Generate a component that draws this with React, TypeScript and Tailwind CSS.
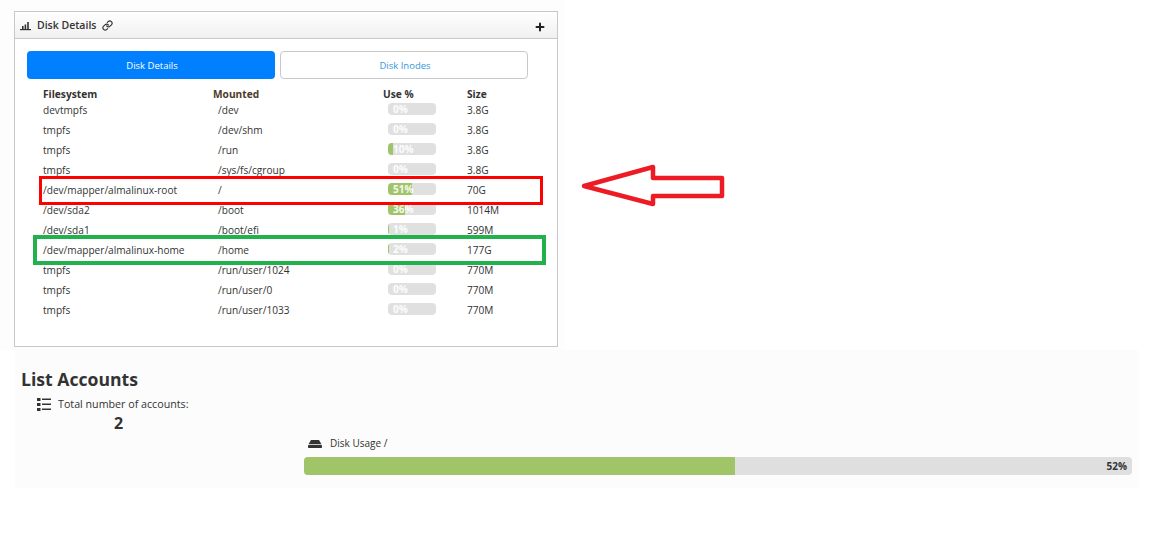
import { Link, Plus } from 'lucide-react'

interface DiskRow {
  fs: string
  mount: string
  use: number
  size: string
}

const ROWS: DiskRow[] = [
  { fs: 'devtmpfs', mount: '/dev', use: 0, size: '3.8G' },
  { fs: 'tmpfs', mount: '/dev/shm', use: 0, size: '3.8G' },
  { fs: 'tmpfs', mount: '/run', use: 10, size: '3.8G' },
  { fs: 'tmpfs', mount: '/sys/fs/cgroup', use: 0, size: '3.8G' },
  { fs: '/dev/mapper/almalinux-root', mount: '/', use: 51, size: '70G' },
  { fs: '/dev/sda2', mount: '/boot', use: 36, size: '1014M' },
  { fs: '/dev/sda1', mount: '/boot/efi', use: 1, size: '599M' },
  { fs: '/dev/mapper/almalinux-home', mount: '/home', use: 2, size: '177G' },
  { fs: 'tmpfs', mount: '/run/user/1024', use: 0, size: '770M' },
  { fs: 'tmpfs', mount: '/run/user/0', use: 0, size: '770M' },
  { fs: 'tmpfs', mount: '/run/user/1033', use: 0, size: '770M' },
]

function ChartIcon() {
  return (
    <svg width="11" height="10" viewBox="0 0 11 10" className="text-[#333]" fill="currentColor">
      <rect x="0" y="8" width="11" height="1.2" />
      <rect x="2" y="5" width="1.6" height="3" />
      <rect x="4.6" y="3.5" width="1.6" height="4.5" />
      <rect x="7.2" y="1" width="1.6" height="7" />
    </svg>
  )
}

function ListIcon() {
  return (
    <svg width="14" height="13" viewBox="0 0 14 13" className="text-[#333]" fill="currentColor">
      <rect x="0" y="0" width="3.5" height="3" />
      <rect x="5" y="0.5" width="9" height="1.5" />
      <rect x="0" y="5" width="3.5" height="3" />
      <rect x="5" y="5.5" width="9" height="1.5" />
      <rect x="0" y="10" width="3.5" height="3" />
      <rect x="5" y="10.5" width="9" height="1.5" />
    </svg>
  )
}

function DriveIcon() {
  return (
    <svg width="14" height="8" viewBox="0 0 14 8" className="text-[#333]" fill="currentColor">
      <path d="M3 0h8l2.5 4.2H.5z" />
      <rect x="0" y="5" width="14" height="3" rx="0.8" />
    </svg>
  )
}

function UseBar({ value }: { value: number }) {
  return (
    <div className="relative h-3 w-12 overflow-hidden rounded bg-[#e0e0e0]">
      <div className="h-full bg-[#a0c569]" style={{ width: `${value}%` }} />
      <span className="absolute inset-y-0 left-[5px] flex items-center pb-[1px] text-[10px] font-bold leading-none text-white/90">
        {value}%
      </span>
    </div>
  )
}

export default function App() {
  return (
    <div className="relative h-[534px] w-[1169px] overflow-hidden bg-white font-['Open_Sans',sans-serif] text-[#333]">
      <div className="h-[350px] w-[565px] bg-[#fdfdfd] pl-[14px] pt-[11px]">
        <div className="h-[336px] w-[544px] border border-[#c8c8c8] bg-white">
          {/* Panel header */}
          <div className="flex h-[27px] items-center justify-between border-b border-[#c8c8c8] bg-gradient-to-b from-white to-[#f0f0f0] pl-[5px] pr-[11px]">
            <div className="flex items-center pt-[2px]">
              <ChartIcon />
              <span className="ml-[6px] text-[10.5px] font-semibold">Disk Details</span>
              <Link size={11} className="ml-[6px] -translate-y-[1px] text-[#333]" strokeWidth={2.5} />
            </div>
            <Plus size={12} strokeWidth={4} className="mt-[3px] text-[#222]" />
          </div>

          {/* Tabs */}
          <div className="flex gap-[5px] pl-3 pt-3">
            <div className="flex h-7 w-[248px] items-center justify-center rounded-[4px] bg-[#007fff] pl-[2px] pt-[2px] text-[9.5px] text-white">
              Disk Details
            </div>
            <div className="flex h-7 w-[248px] items-center justify-center rounded-[4px] border border-[#c8c8c8] bg-white pl-[2px] pt-[2px] text-[9.5px] text-[#3498db]">
              Disk Inodes
            </div>
          </div>

          {/* Table */}
          <div className="pl-[28px] pt-[9px] text-[10.1px]">
            <div className="grid h-[13px] grid-cols-[170px_170px_84px_auto] items-center text-[10.2px] font-bold leading-none">
              <span>Filesystem</span>
              <span className="text-[#4d3a2a]">Mounted</span>
              <span>Use %</span>
              <span>Size</span>
            </div>
            {ROWS.map((r, i) => (
              <div key={i} className="grid h-5 grid-cols-[170px_170px_84px_auto] items-center">
                <span>{r.fs}</span>
                <span className="pl-[5px]">{r.mount}</span>
                <div className="pb-[4px] pl-[5px]">
                  <UseBar value={r.use} />
                </div>
                <span>{r.size}</span>
              </div>
            ))}
          </div>
        </div>
      </div>

      {/* List accounts */}
      <div className="ml-[15px] h-[138px] w-[1123px] bg-[#fcfcfc] pl-[6px] pt-[17px]">
        <h2 className="text-[17.6px] font-bold leading-[24px] text-[#333]">List Accounts</h2>
        <div className="ml-[16px] mt-[5px] flex items-center">
          <ListIcon />
          <span className="ml-[7px] text-[10.7px]">Total number of accounts:</span>
        </div>
        <div className="ml-[93px] text-[16px] font-bold leading-[22px]">2</div>
        <div className="ml-[287px] mt-[2px] flex items-center">
          <DriveIcon />
          <span className="ml-[8px] text-[10px]">Disk Usage /</span>
        </div>
        <div className="relative ml-[283px] mt-[6px] h-[18px] w-[828px] overflow-hidden rounded bg-[#dfdfdf]">
          <div className="h-full w-[52%] bg-[#a0c569]" />
          <span className="absolute inset-y-0 right-[5px] flex items-center text-[10px] font-bold">52%</span>
        </div>
      </div>

      {/* Annotations drawn on top of the screenshot */}
      <div className="absolute left-[39px] top-[176px] h-[29px] w-[504px] border-[3px] border-[#ff0000]" />
      <div className="absolute left-[33px] top-[235px] h-[30px] w-[513px] border-4 border-[#22b14c]" />
      <svg className="absolute left-[575px] top-[160px]" width="155" height="52" viewBox="575 160 155 52" fill="none">
        <polygon
          points="584,186 653,167 653,178 722,178 722,196 653,196 653,204"
          stroke="#ed1c24"
          strokeWidth="4.5"
          strokeLinejoin="round"
        />
      </svg>
    </div>
  )
}
